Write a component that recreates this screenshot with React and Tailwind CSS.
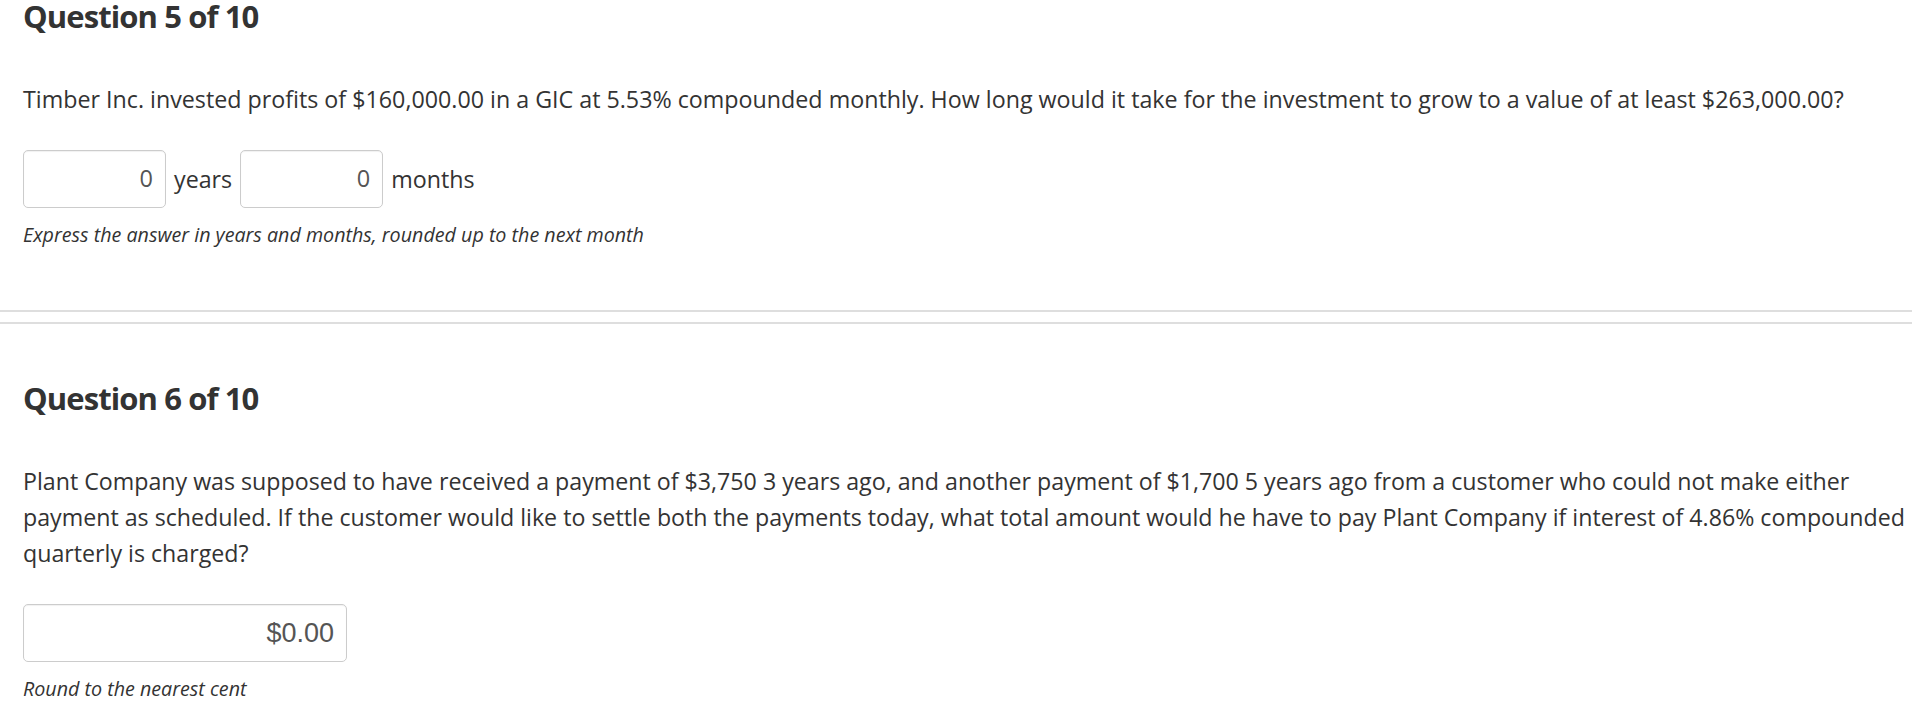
const openSans = "font-['Open_Sans',sans-serif]";

function NumberBox({ value, width, money = false }) {
  return (
    <div
      className={`flex h-[58px] items-center justify-end rounded-[5px] border border-[#cccccc] bg-white pr-[12px] shadow-[inset_0_1px_1px_rgba(0,0,0,0.06)] ${width} ${
        money
          ? "font-['Liberation_Sans',Arial,sans-serif] text-[27px] text-[#555555]"
          : "text-[23.5px] text-[#555555]"
      }`}
    >
      {value}
    </div>
  );
}

function Hint({ children }) {
  return <p className="mt-[14px] text-[19.7px] italic leading-[25px] text-[#333333]">{children}</p>;
}

export default function App() {
  return (
    <div className={`${openSans} min-h-[703px] bg-white text-[#333333]`}>
      <section className="pl-[23px]">
        <h2 className="text-[31px] font-bold leading-[32px] tracking-[-0.9px]">Question 5 of 10</h2>
        <p className="mt-[49px] text-[23.25px] leading-[36px]">
          Timber Inc. invested profits of $160,000.00 in a GIC at 5.53% compounded monthly. How long would it
          take for the investment to grow to a value of at least $263,000.00?
        </p>
        <div className="mt-[33px] flex items-center">
          <NumberBox value="0" width="w-[143px]" />
          <span className="px-[8px] text-[23.25px]">years</span>
          <NumberBox value="0" width="w-[143px]" />
          <span className="px-[8px] text-[23.25px]">months</span>
        </div>
        <Hint>Express the answer in years and months, rounded up to the next month</Hint>
      </section>

      <div className="mt-[63px] h-[2px] bg-[#dedede]" />
      <div className="mt-[10px] h-[2px] bg-[#dedede]" />

      <section className="mt-[58px] pl-[23px]">
        <h2 className="text-[31px] font-bold leading-[32px] tracking-[-0.9px]">Question 6 of 10</h2>
        <p className="mt-[49px] text-[23.2px] leading-[36px]">
          Plant Company was supposed to have received a payment of $3,750 3 years ago, and another payment of
          $1,700 5 years ago from a customer who could not make either payment as scheduled. If the customer
          would like to settle both the payments today, what total amount would he have to pay Plant Company if
          interest of 4.86% compounded quarterly is charged?
        </p>
        <div className="mt-[33px] flex">
          <NumberBox value="$0.00" width="w-[324px]" money />
        </div>
        <Hint>Round to the nearest cent</Hint>
      </section>
    </div>
  );
}
